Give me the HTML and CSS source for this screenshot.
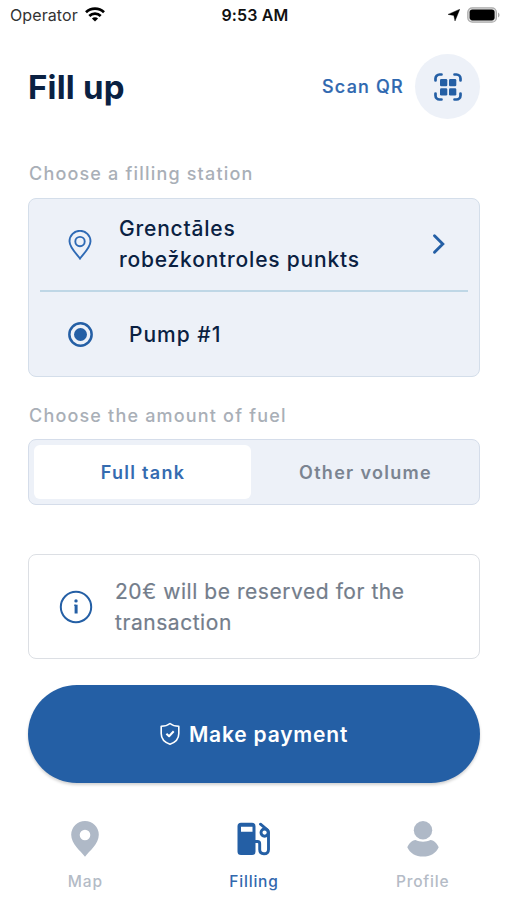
FILE: index.html
```html
<!DOCTYPE html>
<html lang="en">
<head>
<meta charset="utf-8">
<title>Fill up</title>
<link rel="stylesheet" href="styles.css">
</head>
<body>
<div class="status">
  <div class="status-left"><span class="operator">Operator</span>
    <svg width="20" height="15" viewBox="0 0 20 15"><g fill="none" stroke="#000" stroke-width="2.7"><path d="M1 5.3a12.8 12.8 0 0 1 18 0"/><path d="M4.3 9a8.1 8.1 0 0 1 11.4 0"/></g><path d="M10 14.6 6.9 11.5a4.4 4.4 0 0 1 6.2 0z"/></svg>
  </div>
  <span class="time">9:53 AM</span>
  <div class="status-right">
    <svg width="12" height="12" viewBox="0 0 12 12"><path d="M11.8.2 7 12 5.800 6.400 0 5.400z" stroke="#000" stroke-width=".4"/></svg>
    <svg width="33" height="16" viewBox="0 0 33 16"><rect x=".8" y=".8" width="28.6" height="14.4" rx="4.5" fill="#e0e0e0" stroke="#aaa" stroke-width="1.2"/><rect x="2.6" y="2.6" width="25" height="10.8" rx="2.8"/><path d="M31 5.5c2 .7 2 4.300 0 5z" fill="#aaa"/></svg>
  </div>
</div>
<header class="header">
  <h1 class="title">Fill up</h1>
  <span class="scan">Scan QR</span>
  <button class="qr" aria-label="Scan QR">
    <svg width="28" height="28" viewBox="0 0 28 28"><path d="M1.500 7.500V5.500a4 4 0 0 1 4-4H7.500M20.500 1.500h2a4 4 0 0 1 4 4V7.500M26.500 20.500v2a4 4 0 0 1-4 4H20.500M7.500 26.500H5.500a4 4 0 0 1-4-4V20.500" fill="none" stroke="#245fa5" stroke-width="2.700" stroke-linecap="round"/><g fill="#245fa5"><rect x="6" y="6" width="7.300" height="7.300" rx="1.300"/><rect x="15" y="6" width="7.300" height="7.300" rx="1.300"/><rect x="6" y="15.200" width="7.300" height="7.300" rx="1.300"/><rect x="15" y="15.200" width="7.300" height="7.300" rx="1.300"/></g></svg>
  </button>
</header>
<main class="main">
  <h2 class="label">Choose a filling station</h2>
  <section class="card">
    <div class="row station">
      <svg class="row-icon" width="24" height="30" viewBox="0 0 24 30" fill="none" stroke="#2f6ab5" stroke-width="1.900"><path d="M12 28.500C10.500 26 1.500 18 1.500 11.300a10.500 10.500 0 0 1 21 0C22.500 18 13.500 26 12 28.500z"/><circle cx="12" cy="11.600" r="4.700"/></svg>
      <span class="station-name">Grenctāles<br>robežkontroles punkts</span>
      <svg class="chevron" width="14" height="22" viewBox="0 0 14 22"><path d="m2.500 2.700 8.300 8.300-8.300 8.300" fill="none" stroke="#245fa5" stroke-width="2.900" stroke-linecap="round"/></svg>
    </div>
    <div class="row pump">
      <svg class="row-icon" width="25" height="25" viewBox="0 0 24 24"><circle cx="12" cy="12" r="10.700" fill="none" stroke="#245fa5" stroke-width="2.400"/><circle cx="12" cy="12" r="6.200" fill="#245fa5"/></svg>
      <span class="pump-name">Pump #1</span>
    </div>
  </section>
  <h2 class="label amount">Choose the amount of fuel</h2>
  <div class="segments"><span class="segment active">Full tank</span><span class="segment">Other volume</span></div>
  <div class="info">
    <svg width="34" height="34" viewBox="0 0 34 34"><circle cx="17" cy="17" r="15.200" fill="none" stroke="#245fa5" stroke-width="2"/><circle cx="17" cy="10.900" r="1.700" fill="#245fa5"/><path d="M15 15.200h2" fill="none" stroke="#245fa5" stroke-width="1"/><path d="M17.100 14.700v8.800" stroke="#245fa5" stroke-width="3"/></svg>
    <p class="info-text">20€ will be reserved for the<br>transaction</p>
  </div>
  <button class="pay">
    <svg width="20" height="24" viewBox="0 0 20 24" fill="none" stroke="#fff" stroke-width="1.600" stroke-linejoin="round"><path d="M10 1.500c-2.500 2-5.500 2.700-8.800 2.700v7.300c0 5.300 3.200 8.800 8.800 10.700 5.600-1.900 8.800-5.400 8.800-10.700V4.200c-3.300 0-6.300-.7-8.800-2.700z"/><path d="m6.400 11.700 2.700 2.600 4.600-5" stroke-width="2"/></svg>
    <span>Make payment</span>
  </button>
</main>
<nav class="nav">
  <div class="tab"><svg width="36" height="36" viewBox="0 0 36 36"><path fill="#afb9c7" fill-rule="evenodd" d="M18 0a13.800 13.800 0 0 0-13.800 13.800C4.200 23 13.500 30 18 35.700 22.500 30 31.800 23 31.800 13.800A13.800 13.800 0 0 0 18 0zm0 8.700a5.300 5.300 0 1 1 0 10.600 5.300 5.300 0 0 1 0-10.600z"/></svg><span>Map</span></div>
  <div class="tab current"><svg width="36" height="36" viewBox="0 0 36 36"><path fill="#245fa5" fill-rule="evenodd" d="M5 1.700h11a3.500 3.500 0 0 1 3.500 3.500v25.300a3.500 3.500 0 0 1-3.500 3.500H5a3.500 3.500 0 0 1-3.500-3.500V5.200A3.500 3.500 0 0 1 5 1.700zm0 4v5h11.500v-5z"/><path d="M18 20.500h3.500c1.500 0 2.200.7 2.200 2.200v5.800c0 2.800 1.300 4.200 4.200 4.200s4.600-1.500 4.600-4.300v-17c0-1-.3-1.700-1-2.400L24.500 3.200" fill="none" stroke="#245fa5" stroke-width="2.900" stroke-linecap="round"/><circle cx="28.600" cy="11.600" r="3.600" fill="none" stroke="#245fa5" stroke-width="2.900"/></svg><span>Filling</span></div>
  <div class="tab"><svg width="36" height="36" viewBox="0 0 36 36" fill="#afb9c7"><circle cx="18" cy="9.300" r="9.200"/><path d="M2.300 26.200c1.500-3.800 4.400-6.800 8.200-7.300 4.500 2.300 10.500 2.300 15 0 3.800.5 6.700 3.500 8.200 7.300-2.500 6-8.500 9.300-15.700 9.300S4.800 32.200 2.300 26.200z"/></svg><span>Profile</span></div>
</nav>
</body>
</html>
```
FILE: styles.css
```css
* { box-sizing: border-box; }
body { margin: 0; width: 507px; height: 900px; overflow: hidden; background: #fff; color: #0a2142; font-family: Inter, sans-serif; }
svg { display: block; flex: none; }
h1, h2, p { margin: 0; }
button { border: 0; padding: 0; font: inherit; }
.status { height: 29px; display: grid; grid-template-columns: 1fr auto 1fr; align-items: center; padding: 0 7px 0 10px; color: #111; font-size: 16px; }
.status-left, .status-right { display: flex; align-items: center; gap: 7px; }
.status-left { color: #333; letter-spacing: .1px; }
.status-right { justify-content: flex-end; }
.time { font-weight: 600; letter-spacing: .15px; }
.header { height: 115px; display: flex; align-items: center; padding: 0 27px 0 28px; }
.title { flex: 1; font-size: 33px; line-height: 40px; font-weight: 700; letter-spacing: .2px; }
.scan { font-size: 18px; font-weight: 500; letter-spacing: 1.2px; color: #2f68b0; margin-right: 11px; -webkit-text-stroke: .2px; }
.qr { width: 65px; height: 65px; border-radius: 50%; background: #edf1f8; display: flex; align-items: center; justify-content: center; }
.main { padding: 18px 27px 0 28px; }
.label { height: 24px; padding-left: 1px; font-size: 18px; line-height: 24px; font-weight: 500; letter-spacing: 1.180px; color: #a9afb7; white-space: nowrap; }
.card { height: 179px; margin-top: 12px; padding: 0 11px; border: 1.500px solid #d4deea; border-radius: 8px; background: #edf1f8; }
.row { display: flex; align-items: center; padding-left: 28px; font-size: 21px; font-weight: 500; letter-spacing: .8px; }
.station { height: 93px; border-bottom: 2px solid #bfd7e6; }
.pump { height: 85px; }
.station-name { margin-left: 27px; margin-top: -2px; line-height: 31px; flex: 1; white-space: nowrap; }
.chevron { margin-right: 22px; margin-top: -1px; }
.pump-name { margin-left: 36px; letter-spacing: 1px; }
.amount { margin-top: 27px; }
.segments { display: flex; height: 66px; margin-top: 11px; padding: 5px; border: 1.500px solid #d5ddea; border-radius: 8px; background: #edf1f8; }
.segment { flex: 1; display: flex; align-items: center; justify-content: center; border-radius: 6px; font-size: 18px; font-weight: 600; letter-spacing: 1.300px; color: #7b8491; padding-left: 6px; }
.segment.active { flex: 0 0 217px; padding-left: 1px; background: #fff; color: #356bb0; }
.info { height: 105px; margin-top: 49px; display: flex; align-items: center; border: 1.500px solid #dcdfe4; border-radius: 8px; padding-left: 30px; gap: 22px; }
.info-text { font-size: 21px; line-height: 31px; letter-spacing: .55px; color: #737d8b; white-space: nowrap; -webkit-text-stroke: .2px; }
.pay { width: 452px; height: 98px; margin-top: 26px; border-radius: 49px; display: flex; align-items: center; justify-content: center; gap: 9px; background: #245fa5; color: #fff; font-size: 21px; font-weight: 600; letter-spacing: .8px; box-shadow: 0 2px 3px #0000002e; }
.nav { display: grid; grid-template-columns: repeat(3, 1fr); padding: 38px 0 0 1px; }
.tab { display: flex; flex-direction: column; align-items: center; gap: 15px; font-size: 15.500px; line-height: 20px; letter-spacing: .8px; font-weight: 500; color: #b4bbc6; }
.current { color: #3268ae; }
```
